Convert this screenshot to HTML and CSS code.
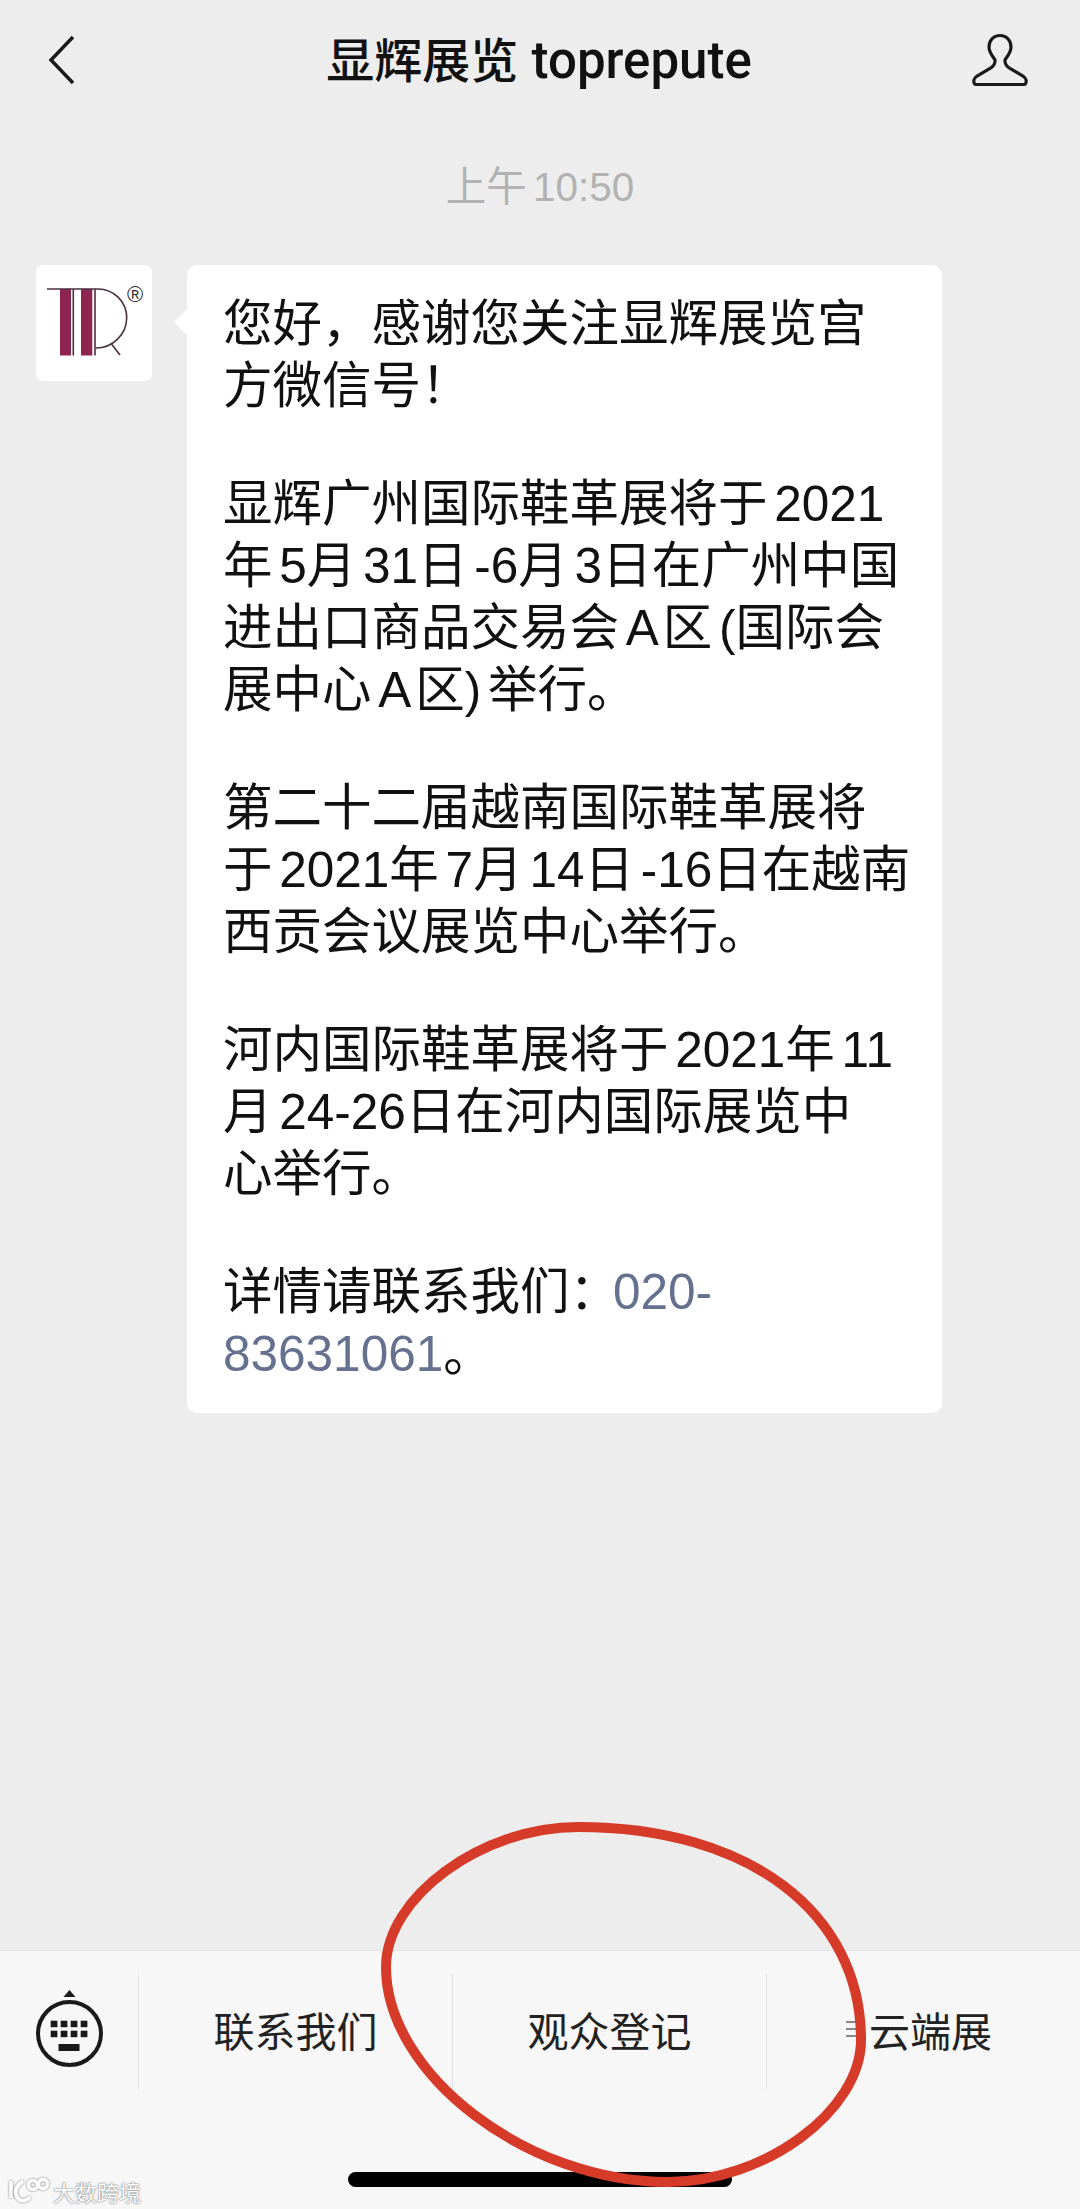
FILE: index.html
```html
<!DOCTYPE html>
<html lang="zh-CN">
<head>
    <meta charset="UTF-8">
    <meta name="viewport" content="width=device-width, initial-scale=1.0">
    <title>显辉展览 toprepute</title>
    <link rel="stylesheet" href="styles.css">
</head>
<body>
    <header class="header">
        <svg class="back-icon" viewBox="0 0 28 50" aria-hidden="true">
            <path d="M25 2 L3 25 L25 48"/>
        </svg>
        <h1 class="title">显辉展览 <span class="title-latin">toprepute</span></h1>
        <svg class="person-icon" viewBox="0 0 60 56" aria-hidden="true">
            <path d="M30 3.5 C23 3.5 19 9 19 15 C19 21 23.5 25 25 28 C25.5 32 23 34.5 20 36.5 L7 44 C4 46 3.5 49 4 50.5 C4.5 52.5 5 52.5 7 52.5 L53 52.5 C55 52.5 55.5 52.5 56 50.5 C56.5 49 56 46 53 44 L40 36.5 C37 34.5 34.5 32 35 28 C36.5 25 41 21 41 15 C41 9 37 3.5 30 3.5 Z"/>
        </svg>
    </header>

    <div class="time">上午 10:50</div>

    <main class="chat">
        <div class="avatar">
            <svg viewBox="0 0 116 116" aria-hidden="true">
                <rect class="logo-bar" x="24" y="24" width="11" height="66.5"/>
                <rect class="logo-bar" x="45" y="24" width="11.3" height="66.5"/>
                <path class="logo-line" d="M11 24 H62 C78 24 90.7 37 90.7 52.5 C90.7 70 76 83 60 83"/>
                <path class="logo-line" d="M37.3 24 V90.5 M59 24 V90.5 M75.5 79 L84 90"/>
                <text class="logo-mark" x="99" y="37">®</text>
            </svg>
        </div>
        <div class="bubble">
            <p>您好，感谢您关注显辉展览宫<br>方微信号！</p>
            <p>显辉广州国际鞋革展将于 2021<br>年 5月 31日 -6月 3日在广州中国<br>进出口商品交易会 A 区 (国际会<br>展中心 A 区) 举行。</p>
            <p>第二十二届越南国际鞋革展将<br>于 2021年 7月 14日 -16日在越南<br>西贡会议展览中心举行。</p>
            <p>河内国际鞋革展将于 2021年 11<br>月 24-26日在河内国际展览中<br>心举行。</p>
            <p>详情请联系我们：<span class="phone">020-<br>83631061</span>。</p>
        </div>
    </main>

    <footer class="menu-bar">
        <div class="menu-row">
            <div class="keyboard-cell">
                <svg class="keyboard-icon" viewBox="0 0 70 80" aria-hidden="true">
                    <path class="key" d="M29.5 7 L35.5 0 L41.5 7 Z"/>
                    <circle class="dial" cx="35.5" cy="43.5" r="31.5"/>
                    <rect class="key" x="16.7" y="30.7" width="6.7" height="6.5"/>
                    <rect class="key" x="26.7" y="30.7" width="6.7" height="6.5"/>
                    <rect class="key" x="36.7" y="30.7" width="6.7" height="6.5"/>
                    <rect class="key" x="46.7" y="30.7" width="6.7" height="6.5"/>
                    <rect class="key" x="16.7" y="40.7" width="6.7" height="6.5"/>
                    <rect class="key" x="26.7" y="40.7" width="6.7" height="6.5"/>
                    <rect class="key" x="36.7" y="40.7" width="6.7" height="6.5"/>
                    <rect class="key" x="46.7" y="40.7" width="6.7" height="6.5"/>
                    <rect class="key" x="24.5" y="54" width="21" height="7"/>
                </svg>
            </div>
            <div class="menu-item">联系我们</div>
            <div class="menu-item">观众登记</div>
            <div class="menu-item"><span class="sub-icon"></span><span class="sub-label">云端展</span></div>
        </div>
        <div class="home-indicator"></div>
    </footer>

    <svg class="ring" viewBox="370 1810 510 390" aria-hidden="true">
        <path d="M578 1827 C748 1827 861 1912 861 2040 C861 2111 764.5 2182 668 2182 C527 2182 386 2074.5 386 1967 C386 1897 482 1827 578 1827 Z"/>
    </svg>

    <div class="watermark">
        <svg class="watermark-logo" viewBox="0 0 42 26" aria-hidden="true">
            <path d="M3 3 V20 M15 3 C7 9 6 14 9 19 C12 24 18 24 22 19"/>
            <circle cx="25" cy="7" r="4.5"/>
            <circle cx="35" cy="6" r="4.5"/>
        </svg>
        <span>大数跨境</span>
    </div>
</body>
</html>
```

FILE: styles.css
```css
body {
    position: relative;
    display: flex;
    flex-direction: column;
    height: 2209px;
    margin: 0;
    overflow: hidden;
    font-family: "Liberation Sans", "Noto Sans CJK SC", sans-serif;
    background-color: #ededed;
    color: #111;
}

/* top bar */
.header {
    display: grid;
    grid-template-columns: 1fr auto 1fr;
    align-items: center;
    height: 120px;
    padding: 0 50px 4px 48px;
}

.title {
    margin: 0 0 7px;
    font-size: 48px;
    font-weight: 500;
}

.title-latin {
    font-family: Roboto, "Liberation Sans", sans-serif;
    font-size: 51px;
}

.back-icon {
    width: 28px;
    height: 50px;
    fill: none;
    stroke: #1a1a1a;
    stroke-width: 3.5;
}

.person-icon {
    justify-self: end;
    width: 60px;
    height: 56px;
    fill: none;
    stroke: #1a1a1a;
    stroke-width: 3.2;
}

.time {
    margin-top: 38px;
    font-size: 40.5px;
    line-height: 50px;
    text-align: center;
    color: #b2b2b2;
    word-spacing: -5px;
}

/* message */
.chat {
    display: flex;
    align-items: flex-start;
    gap: 35px;
    margin-top: 53px;
    padding-left: 36px;
}

.avatar {
    width: 116px;
    height: 116px;
    border-radius: 7px;
    background-color: #fff;
}

.avatar svg {
    display: block;
}

.logo-bar {
    fill: #8e2450;
}

.logo-line {
    fill: none;
    stroke: #4b3040;
    stroke-width: 1.6;
}

.logo-mark {
    font-size: 22px;
    text-anchor: middle;
    fill: #333;
}

.bubble {
    position: relative;
    width: 683px;
    padding: 28px 36px 28px 36px;
    border-radius: 10px;
    background-color: #fff;
    font-size: 49.5px;
    line-height: 62px;
    word-spacing: -7px;
}

.bubble::before {
    content: "";
    position: absolute;
    left: -9px;
    top: 47px;
    width: 20px;
    height: 20px;
    background-color: #fff;
    transform: rotate(45deg);
}

.bubble p {
    position: relative;
    margin: 0 0 56px;
    white-space: nowrap;
}

.bubble p:last-child {
    margin-bottom: 0;
}

.phone {
    margin-left: -6px;
    color: #65718f;
}

/* bottom menu */
.menu-bar {
    display: flex;
    flex-direction: column;
    margin-top: auto;
    height: 259px;
    padding-top: 23px;
    box-sizing: border-box;
    border-top: 1px solid #e6e6e6;
    background-color: #f7f7f7;
}

.menu-row {
    display: flex;
    height: 115px;
}

.keyboard-cell {
    display: flex;
    justify-content: center;
    width: 138px;
    padding-top: 16px;
    box-sizing: border-box;
}

.keyboard-icon {
    width: 70px;
    height: 80px;
}

.dial {
    fill: none;
    stroke: #1a1a1a;
    stroke-width: 4;
}

.key {
    fill: #1a1a1a;
}

.menu-item {
    display: flex;
    flex: 1;
    align-items: center;
    justify-content: center;
    padding-bottom: 6px;
    border-left: 1px solid #e0e0e0;
    font-size: 41px;
    color: #222;
}

.sub-icon {
    width: 16px;
    height: 2px;
    margin-right: 7px;
    background-color: #888;
    box-shadow: 0 -7px 0 #888, 0 7px 0 #888;
}

.sub-label {
    margin-right: 9px;
}

.home-indicator {
    align-self: flex-start;
    width: 384px;
    height: 15px;
    margin: 83px 0 0 348px;
    border-radius: 8px;
    background-color: #000;
}

/* overlays */
.ring {
    position: absolute;
    left: 370px;
    top: 1810px;
    width: 510px;
    height: 390px;
    fill: none;
    stroke: #d63a28;
    stroke-width: 10;
}

.watermark {
    position: absolute;
    left: 8px;
    top: 2175px;
    display: flex;
    align-items: center;
    gap: 3px;
    font-size: 22px;
    color: #fff;
    text-shadow: 0 0 2px #777, 0 0 1px #777;
}

.watermark-logo {
    width: 42px;
    height: 26px;
    fill: none;
    stroke: #fff;
    stroke-width: 3.5;
    filter: drop-shadow(0 0 1px #777);
}
```
